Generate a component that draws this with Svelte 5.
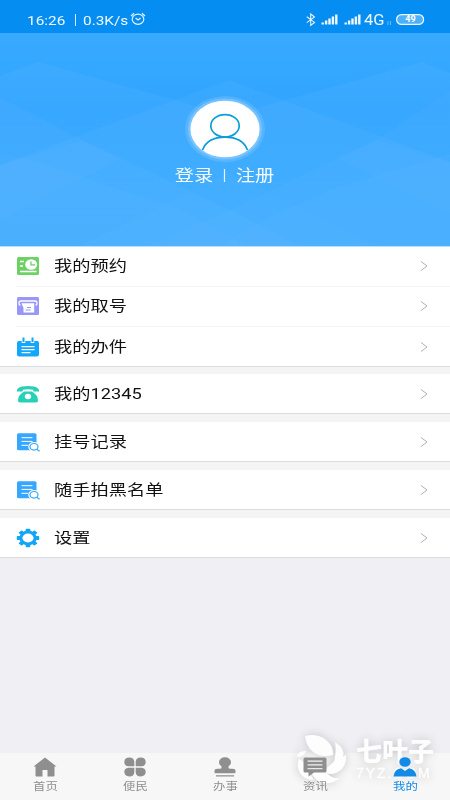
<script>
  const groups = [
    [
      { icon: 'booking', label: '我的预约' },
      { icon: 'ticket', label: '我的取号' },
      { icon: 'calendar', label: '我的办件' }
    ],
    [{ icon: 'phone', label: '我的12345' }],
    [{ icon: 'record', label: '挂号记录' }],
    [{ icon: 'record', label: '随手拍黑名单' }],
    [{ icon: 'gear', label: '设置' }]
  ];
  const tabs = [
    { icon: 'home', label: '首页' },
    { icon: 'clover', label: '便民' },
    { icon: 'stamp', label: '办事' },
    { icon: 'news', label: '资讯' },
    { icon: 'me', label: '我的', active: true }
  ];
  const bars = [0, 1, 2, 3, 4];
  const teeth = [0, 45, 90, 135, 180, 225, 270, 315];
</script>

<main>
  <div class="status">
    <span class="time">16:26</span>
    <i class="bar"></i>
    <span class="speed">0.3K/s</span>
    <svg class="alarm" width="16" height="14" viewBox="0 0 16 14" fill="none" stroke="#e6f4ff" stroke-width="1.2">
      <ellipse cx="8" cy="7.2" rx="5.8" ry="5.1" /><path d="M1 4 4 1.2M15 4 12 1.2M5.6 6 8 8 10.6 6" />
    </svg>
    <div class="right">
      <svg width="118" height="16" viewBox="0 0 118 16">
        <path d="M.8 4.800 8.500 10.400 4.700 13.400V2L8.500 5 .8 10.600" fill="none" stroke="#e6f4ff" stroke-width="1.1" />
        {#each [15.5, 38.5] as x}
          {#each bars as i}
            <rect x={x + i * 3.4} y={10.500 - i * 2} width="2.4" height={2 + i * 2} fill="#f0f8ff" />
          {/each}
        {/each}
        <path d="M82 9v4M84.500 9v4" stroke="#6dbaf8" stroke-width="1" />
        <rect x="90.600" y="2.600" width="27" height="9.800" rx="4.900" fill="#4fb0fa" stroke="#eef8ff" stroke-width="1.200" />
      </svg>
      <span class="net">4G</span>
      <span class="battery">49</span>
    </div>
  </div>

  <header>
    <svg class="pattern" width="450" height="213" viewBox="0 0 450 213" preserveAspectRatio="none">
      <g fill="#fff">
        <path d="M0 43 38 29 182 69 229 84 278 69 422 29 450 40V213H0Z" fill-opacity=".045" />
        <path d="M0 132 229 47 450 129V213H0Z" fill-opacity=".035" />
        <path d="M0 64 82 107 230 177 300 213H0Z" fill-opacity=".03" />
        <path d="M450 57 377 107 230 177 150 213H450Z" fill-opacity=".025" />
        <path d="M0 119 24 125 180 176 245 213H0Z" fill-opacity=".025" />
        <path d="M450 121 337 154 275 181 220 213H450Z" fill-opacity=".025" />
        <path d="M0 132 82 107 122 125 0 187Z" fill-opacity=".025" />
        <path d="M450 129 377 107 337 125 450 181Z" fill-opacity=".025" />
        <path d="M80 213 229 140 380 213Z" fill-opacity=".015" />
      </g>
    </svg>
    <div class="profile">
      <svg width="82" height="68" viewBox="0 0 82 68">
        <ellipse cx="41" cy="34" rx="40" ry="33" fill="#fff" fill-opacity=".13" />
        <ellipse cx="41" cy="34" rx="37" ry="30.500" fill="#fff" fill-opacity=".2" />
        <ellipse cx="41" cy="34" rx="34.600" ry="28.300" fill="#fff" />
        <g fill="none" stroke="#0b9dd8" stroke-width="1.700">
          <ellipse cx="41" cy="30.800" rx="14.200" ry="11.200" />
          <path d="M18.500 55C22 46 31 42.200 41 42.200S60 46 63.500 55" />
        </g>
      </svg>
      <div class="auth"><span>登录</span><i></i><span>注册</span></div>
    </div>
  </header>

  <div class="menu">
    {#each groups as group}
      <section>
        {#each group as item}
          <div class="row">
            <svg class="ico" width="24" height="20" viewBox="0 0 24 20">
              {#if item.icon === 'booking'}
                <rect x="1" y="1" width="22" height="18" rx="1.500" fill="#6cd263" />
                <path d="M4 5.500h4M4 10h3M4 15.500h16.500" stroke="#fff" stroke-width="1.500" />
                <ellipse cx="15.200" cy="8.500" rx="6" ry="5.200" fill="#fff" />
                <path d="M15 5.500v3.400h4" fill="none" stroke="#6cd263" stroke-width="1.300" />
              {:else if item.icon === 'ticket'}
                <rect x="1" y="1" width="22" height="18" rx="1.500" fill="#9896fa" />
                <path d="M4.500 9.200Q3 9.200 3 7.500V6.500Q3 5 5 5H19Q21 5 21 6.500V7.500Q21 9.200 19.500 9.200" fill="none" stroke="#fff" stroke-width="1.300" />
                <path d="M5.500 7.300H18.200V16.500H7.500V12Z" fill="#fff" />
                <path d="M11 11.500h4M9.500 14h5" stroke="#9896fa" />
              {:else if item.icon === 'calendar'}
                <rect x="1" y="4" width="22" height="15.500" rx="2" fill="#12a7fb" />
                <path d="M7.500 1v5M16.500 1v5" stroke="#fff" stroke-width="3.600" />
                <path d="M7.500 .5v4.500M16.500 .5v4.500" stroke="#12a7fb" stroke-width="2" />
                <path d="M5.500 9.600h13M5.500 12.600h13M5.500 15.700h9" stroke="#fff" stroke-width="1.200" />
              {:else if item.icon === 'phone'}
                <g fill="#28d1b6">
                  <path d="M.7 7.500Q1 3.500 6 2.600Q12 1.400 18 2.600Q23 3.500 23.300 7.500H17.300V5.800Q12 4.700 6.700 5.800V7.500Z" />
                  <path fill-rule="evenodd" d="M8 7.500H16Q22 11 22 16.500Q22 18.500 20 18.500H4Q2 18.500 2 16.500Q2 11 8 7.500ZM12 9.800A3.200 2.700 0 1 0 12 15.200A3.200 2.700 0 1 0 12 9.800Z" />
                </g>
              {:else if item.icon === 'record'}
                <rect x="1" y="1.300" width="19.500" height="17" rx="1.500" fill="#38a5ff" />
                <path d="M5.500 5.700h11M5.500 9.400h11M5.500 13.300h6.500" stroke="#fff" stroke-width="1" />
                <ellipse cx="18" cy="14.800" rx="5.800" ry="4.900" fill="#fff" />
                <ellipse cx="18" cy="14.800" rx="4" ry="3.300" fill="none" stroke="#38a5ff" stroke-width="1.200" />
                <path d="M20.600 17.200 23.700 19.300" stroke="#38a5ff" stroke-width="1.300" />
              {:else}
                <g fill="#12a5f8" transform="translate(12 10) scale(1.22 1)">
                  {#each teeth as a}
                    <rect x="-1.900" y="-9.200" width="3.800" height="4" rx=".7" transform={`rotate(${a})`} />
                  {/each}
                </g>
                <ellipse cx="12" cy="10" rx="7.100" ry="5.900" fill="#fff" stroke="#12a5f8" stroke-width="3" />
              {/if}
            </svg>
            <span class="label">{item.label}</span>
            <svg class="chev" width="8" height="12" viewBox="0 0 8 12" fill="none" stroke="#b1b1b1" stroke-width="1"><path d="M1 1.500 7 6 1 10.500" /></svg>
          </div>
        {/each}
      </section>
    {/each}
  </div>

  <nav>
    <div class="watermark">
      <svg width="52" height="52" viewBox="0 0 52 52" fill="#fff">
        <path d="M9 3Q20 0 29 6Q38 13 37 22Q25 25 17 19Q10 13 9 3Z" />
        <path d="M39 9Q50 16 47 24Q43 31 37 32Q41 20 39 9Z" />
        <path d="M50 22Q51 34 42 39Q35 43 28 39Q33 30 50 22Z" />
        <path d="M15 39Q26 35 32 41Q36 46 44 45Q34 53 24 49Q18 46 15 39Z" />
        <path d="M3 26Q10 29 12 37Q14 42 18 47Q8 47 4 40Q0 33 3 26Z" />
        <path d="M1 24Q2 17 10 18Q8 24 1 24Z" />
      </svg>
      <div class="brand"><b>七叶子</b><span>7YZ.COM</span></div>
    </div>
    {#each tabs as tab}
      <div class="tab" class:active={tab.active}>
        <svg width="26" height="22" viewBox="0 0 26 22" fill="currentColor">
          {#if tab.icon === 'home'}
            <path d="M13 1.500 24.500 10.500H22.500V19.500Q22.500 20.500 21.500 20.500H15.500V14H10.500V20.500H4.500Q3.500 20.500 3.500 19.500V10.500H1.500Z" />
          {:else if tab.icon === 'clover'}
            <path d="M12.300 10.300H6.500A5 4.400 0 1 1 12.300 5.500ZM13.700 10.300V5.500A5 4.400 0 1 1 19.500 10.300ZM12.300 11.700V16.500A5 4.400 0 1 1 6.500 11.700ZM13.700 11.700H19.500A5 4.400 0 1 1 13.700 16.500Z" />
          {:else if tab.icon === 'stamp'}
            <ellipse cx="13" cy="6.300" rx="6" ry="5" />
            <path d="M9.500 9.500H16.500V11.500Q16.500 12.700 18 12.700H20.500Q23.500 12.700 23.500 15V16.500Q23.500 17.300 22.500 17.300H3.500Q2.500 17.300 2.500 16.500V15Q2.500 12.700 5.500 12.700H8Q9.500 12.700 9.500 11.500ZM4 19.200h18v1.200H4Z" />
          {:else if tab.icon === 'news'}
            <path fill-rule="evenodd" d="M3 1.500H23Q24.500 1.500 24.500 3V15Q24.500 16.500 23 16.500H12L6.500 20.500V16.500H3Q1.500 16.500 1.500 15V3Q1.500 1.500 3 1.500ZM5.500 4.500v1.300h15V4.500ZM5.500 8.200v1.300h15V8.200ZM5.500 12v1.300h15V12Z" />
          {:else}
            <ellipse cx="13" cy="6" rx="5.700" ry="4.800" />
            <path d="M1.500 20.500Q2 13.500 9 12.200L13 15 17 12.200Q24 13.500 24.500 20.500Z" />
          {/if}
        </svg>
        <span>{tab.label}</span>
      </div>
    {/each}
  </nav>
</main>

<style>
  :global(body) { margin: 0; }
  main { width: 450px; height: 800px; overflow: hidden; display: flex; flex-direction: column; background: #efeff4; font-family: "Roboto", "Noto Sans CJK SC", sans-serif; }
  .status { height: 33px; flex: none; display: flex; align-items: center; padding: 7px 26px 0 27px; box-sizing: border-box; background: #058df1; color: #eef8ff; }
  .time, .speed { font-size: 13.500px; line-height: 16px; white-space: pre; transform: scaleX(1.14); transform-origin: left; }
  .time { width: 48px; }
  .bar { width: 1px; height: 12px; background: #d4ebfd; margin-right: 7px; }
  .speed { width: 47px; }
  .alarm { margin-top: -2px; }
  .right { margin-left: auto; position: relative; height: 16px; }
  .right svg { display: block; overflow: visible; }
  .net { position: absolute; left: 58px; top: 0; font-size: 14px; line-height: 16px; transform: scaleX(1.18); transform-origin: left; }
  .battery { position: absolute; left: 91px; width: 27px; top: 2px; text-align: center; font-size: 9px; line-height: 11px; font-weight: 700; color: #fff; }
  header { height: 213px; flex: none; position: relative; display: flex; justify-content: center; background: linear-gradient(#38aaff 0, #30a4ff 35%, #33a7ff 75%, #33a7fe 100%); }
  .pattern { position: absolute; inset: 0; }
  .profile { position: relative; display: flex; flex-direction: column; align-items: center; padding-top: 62px; }
  .profile svg { display: block; }
  .auth { display: flex; align-items: center; justify-content: center; height: 26px; margin-top: -2px; color: #f5fbff; font-size: 16px; transform: scaleX(1.2); }
  .auth i { width: 1px; height: 13px; margin: 2px 9px 0; background: #e6f4ff; }
  .menu { flex: none; border-top: 1px solid #b5deff; box-sizing: border-box; background: #f4f4f4; }
  section { background: #fff; border-bottom: 1px solid #dcdcdf; margin-bottom: 7.900px; height: 39px; }
  section:first-child { height: 119px; margin-bottom: 7.400px; }
  section:last-child { margin-bottom: 0; }
  .row { height: 39px; display: flex; align-items: center; padding: 0 22px 0 16px; }
  .row:not(:last-child) { box-sizing: border-box; padding-bottom: 1px; }
  .row + .row { border-top: 1px solid #f4f4f5; margin-left: 16px; padding-left: 0; }
  .row + .row:not(:last-child) { height: 40px; }
  .ico { flex: none; margin-right: 14px; }
  .label { font-size: 15.200px; line-height: 20px; color: #111; white-space: nowrap; transform: scaleX(1.2); transform-origin: left; }
  .chev { margin-left: auto; }
  nav { height: 47px; flex: none; margin-top: auto; position: relative; display: flex; background: #f7f7f7; }
  .tab { position: relative; flex: 1; display: flex; flex-direction: column; align-items: center; padding-top: 3px; color: #8f8f8f; }
  .tab.active { color: #118be7; }
  .tab svg { display: block; }
  .tab span { font-size: 10.500px; line-height: 14px; margin-top: 2px; transform: scaleX(1.18); }
  .watermark { position: absolute; left: 296px; top: -20px; display: flex; opacity: .88; filter: drop-shadow(0 0 5px rgba(80, 80, 90, .32)); }
  .brand { display: flex; flex-direction: column; margin-left: 8px; padding-top: 6px; color: #fff; }
  .brand b { font-size: 26px; line-height: 26px; height: 28px; font-weight: 900; white-space: nowrap; }
  .brand span { font-size: 14px; line-height: 12px; letter-spacing: 1.900px; font-family: "Liberation Sans", sans-serif; -webkit-text-stroke: .3px #fff; }
</style>
